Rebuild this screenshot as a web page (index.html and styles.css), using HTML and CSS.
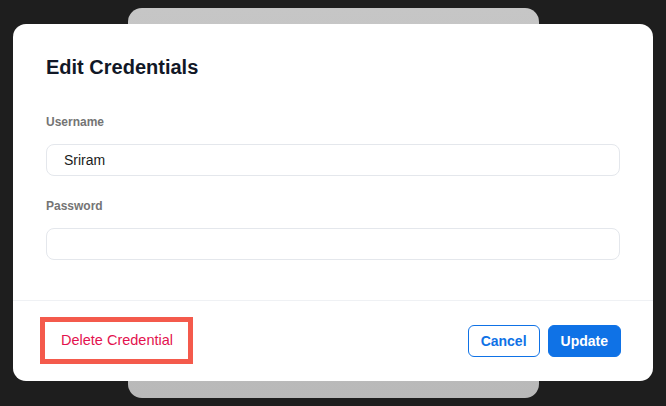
FILE: index.html
```html
<!DOCTYPE html>
<html lang="en">
<head>
<meta charset="utf-8">
<title>Edit Credentials</title>
<link rel="stylesheet" href="styles.css">
</head>
<body>
<div class="stage">
  <div class="backcard"></div>
  <div class="modal">
    <div class="modal-body">
      <h2 class="title">Edit Credentials</h2>
      <div class="field">
        <label class="label">Username</label>
        <div class="input">Sriram</div>
      </div>
      <div class="field">
        <label class="label">Password</label>
        <div class="input"></div>
      </div>
    </div>
    <div class="modal-footer">
      <button class="btn-delete">Delete Credential</button>
      <div class="actions">
        <button class="btn btn-outline">Cancel</button>
        <button class="btn btn-primary">Update</button>
      </div>
    </div>
  </div>
</div>
</body>
</html>
```
FILE: styles.css
```css
* { box-sizing: border-box; }
html, body {
  margin: 0;
  padding: 0;
  background: #1e1e1e;
  font-family: "Liberation Sans", Arial, sans-serif;
}
.stage {
  width: 666px;
  height: 406px;
  display: grid;
  place-items: center;
}
.backcard {
  grid-area: 1 / 1;
  width: 411px;
  height: 390px;
  margin-top: -1px;
  border-radius: 14px;
  background: linear-gradient(#c6c6c6, #b9b9b9);
}
.modal {
  grid-area: 1 / 1;
  width: 640px;
  height: 357px;
  margin-top: -1px;
  background: #ffffff;
  border-radius: 13px;
  display: flex;
  flex-direction: column;
}
.modal-body {
  padding: 31px 33px 40px 33px;
  border-bottom: 1px solid #eff1f4;
}
.title {
  margin: 0 0 35px 0;
  font-size: 20px;
  line-height: 24px;
  font-weight: 700;
  color: #111827;
}
.field + .field { margin-top: 22px; }
.label {
  display: block;
  font-size: 12px;
  line-height: 16px;
  font-weight: 700;
  color: #747474;
  margin-bottom: 14px;
}
.input {
  height: 32px;
  border: 1px solid #e4e7ec;
  border-radius: 8px;
  padding: 0 17px;
  font-size: 14px;
  line-height: 30px;
  color: #1b1b1b;
}
.modal-footer {
  flex: 1;
  display: flex;
  align-items: center;
  justify-content: space-between;
  padding: 0 32px 0 27px;
}
.btn-delete {
  height: 47px;
  margin-top: -2px;
  padding: 0 15px 0 16px;
  border: 5px solid #f45a4c;
  background: #ffffff;
  font-family: inherit;
  font-size: 14.5px;
  color: #e3124e;
}
.actions {
  display: flex;
  gap: 8px;
}
.btn {
  height: 32px;
  padding: 0 12px;
  border-radius: 6px;
  font-family: inherit;
  font-size: 14px;
  font-weight: 700;
  border: 1px solid #0f72e6;
}
.btn-outline {
  background: #ffffff;
  color: #0f72e6;
}
.btn-primary {
  background: #0f72e6;
  color: #ffffff;
}
```
